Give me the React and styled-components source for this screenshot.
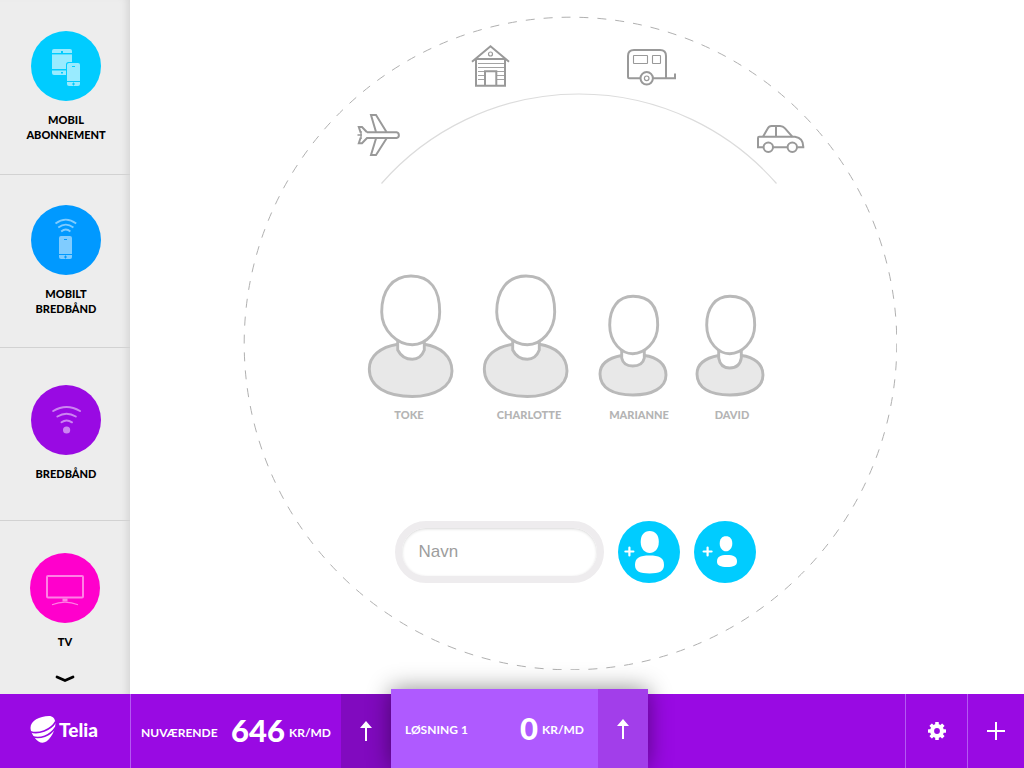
import React from 'react';
import styled, { createGlobalStyle } from 'styled-components';

const color = {
  purple: '#990ae3',
  purpleDark: '#810abf',
  purpleLight: '#af5aff',
  purpleMid: '#a23eea',
  line: '#b459f2',
  cyan: '#00ccff',
  blue: '#0099ff',
  pink: '#ff00cc',
  panel: '#ededed',
  outline: '#999999',
  figure: '#b9b9b9',
};

const GlobalStyle = createGlobalStyle`
  *, *::before, *::after { box-sizing: border-box; }
  body { margin: 0; background: #fff; font-family: Lato, "Liberation Sans", sans-serif; }
  button, input { font: inherit; }
  svg { display: block; }
`;

const Page = styled.div`
  display: flex;
  flex-direction: column;
  min-height: 100vh;
`;

const Upper = styled.div`
  display: flex;
  flex: 1;
`;

/* ---------- sidebar ---------- */

const Sidebar = styled.nav`
  display: flex;
  flex-direction: column;
  flex: 0 0 130px;
  background: ${color.panel};
  box-shadow: inset -8px 0 8px -6px rgba(0, 0, 0, 0.12);
`;

const Product = styled.button`
  display: flex;
  flex-direction: column;
  align-items: center;
  justify-content: center;
  gap: 11px;
  height: 173px;
  padding: 0 0 2px 2px;
  border: 0;
  border-bottom: 1px solid #d2d2d2;
  background: none;
  color: #000;
  font-size: 11px;
  font-weight: 900;
  line-height: 15px;
  text-align: center;
  text-transform: uppercase;
  cursor: pointer;

  &:first-child { height: 175px; }
  &:last-of-type { height: auto; padding: 32px 0 0; border-bottom: 0; }
`;

const Disc = styled.span`
  width: 70px;
  height: 70px;
  border-radius: 50%;
  background: ${(p) => p.$color};
  color: #fff;
`;

const ProductLabel = styled.span`
  width: 92px;
`;

const More = styled.a`
  align-self: center;
  margin-top: 26px;
  color: #000;
`;

/* ---------- stage ---------- */

const Main = styled.main`
  display: flex;
  flex: 1;
  justify-content: center;
  padding: 16px 14px 24px 0;
`;

const Stage = styled.div`
  position: relative;
  display: flex;
  flex-direction: column;
  align-items: center;
  width: 654px;
  min-height: 654px;
  padding: 29px 0 0 8px;
`;

const Rings = styled.svg`
  position: absolute;
  top: 0;
  left: 0;
`;

const PlaceRow = styled.div`
  position: relative;
  display: flex;
  gap: ${(p) => p.$gap};
  margin: ${(p) => p.$margin};
`;

const IconButton = styled.button`
  padding: 0;
  border: 0;
  background: none;
  color: ${color.outline};
  cursor: pointer;
`;

const People = styled.ul`
  position: relative;
  display: grid;
  grid-template-columns: 115px 116px 97px 74px;
  align-items: end;
  margin: 116px 12px 0 0;
  padding: 0;
  list-style: none;
`;

const Person = styled.li`
  width: ${(p) => p.$width};
  color: #b4b4b4;
  font-size: 11px;
  font-weight: 900;
  line-height: 16px;
  text-align: center;
  text-transform: uppercase;

  svg { margin-bottom: 8px; }
`;

const AddForm = styled.form`
  position: relative;
  display: flex;
  gap: 14px;
  margin: 98px 0 0 2px;
`;

const NameInput = styled.input`
  width: 209px;
  height: 62px;
  padding: 0 17px;
  border: 7px solid #eeecee;
  border-radius: 31px;
  outline: 0;
  background: #fff;
  box-shadow: inset 0 1px 3px rgba(0, 0, 0, 0.16);
  font-family: "Liberation Sans", sans-serif;
  font-size: 17px;
  color: #555;

  &::placeholder { color: #9d9d9d; opacity: 1; }
`;

const AddButton = styled.button`
  width: 62px;
  height: 62px;
  padding: 0;
  border: 0;
  border-radius: 50%;
  background: ${color.cyan};
  color: #fff;
  cursor: pointer;
`;

/* ---------- footer bar ---------- */

const Bar = styled.footer`
  display: flex;
  height: 74px;
  background: ${color.purple};
  color: #fff;
`;

const Brand = styled.a`
  display: flex;
  align-items: center;
  gap: 3px;
  flex: 0 0 131px;
  padding: 0 0 3px 30px;
  border-right: 1px solid ${color.line};
  color: #fff;
  font-size: 19px;
  font-weight: 900;
  line-height: 24px;
  text-decoration: none;
`;

const Plan = styled.section`
  display: flex;
  flex: 0 0 ${(p) => (p.$active ? '257px' : '260px')};
  margin-top: ${(p) => (p.$active ? '-5px' : '0')};
  background: ${(p) => (p.$active ? color.purpleLight : 'transparent')};
  box-shadow: ${(p) => (p.$active ? '0 0 22px rgba(0, 0, 0, 0.45)' : 'none')};
  z-index: ${(p) => (p.$active ? 1 : 0)};
`;

const PlanInfo = styled.div`
  display: flex;
  flex: 1;
  align-items: center;
  justify-content: space-between;
  padding: 3px ${(p) => (p.$active ? '14px' : '10px')} 0;
`;

const PlanName = styled.h2`
  margin: 0;
  font-size: 12px;
  font-weight: 700;
  line-height: 16px;
  text-transform: uppercase;
`;

const Price = styled.p`
  display: flex;
  align-items: center;
  gap: 4px;
  margin: 0;
  font-size: 12px;
  font-weight: 700;
  line-height: 16px;
`;

const Amount = styled.strong`
  padding-bottom: 5px;
  font-size: 31px;
  font-weight: 900;
  line-height: 32px;
`;

const BarButton = styled.button`
  display: flex;
  align-items: center;
  justify-content: center;
  flex: 0 0 ${(p) => p.$width};
  padding: 0;
  border: 0;
  background: ${(p) => p.$color || 'transparent'};
  color: #fff;
  cursor: pointer;
`;

const Tools = styled.div`
  display: flex;
  margin-left: auto;

  ${BarButton} { border-left: 1px solid ${color.line}; }
`;

/* ---------- drawings ---------- */

const MobileIcon = () => (
  <svg width="70" height="70" viewBox="0 0 70 70" aria-hidden="true">
    <g fill="#99ebff">
      <path d="M23 18h16a2 2 0 0 1 2 2v2H21v-2a2 2 0 0 1 2-2z" />
      <path d="M21 23.400h20v14.600h-20z" />
      <path d="M21 39.400h20V42a2 2 0 0 1-2 2H23a2 2 0 0 1-2-2z" />
    </g>
    <path d="M30 20h2v2h-2zM30 41h2v1.500h-2z" fill={color.cyan} />
    <rect x="35" y="31" width="15.500" height="25.500" rx="2.500" fill={color.cyan} />
    <rect x="36" y="32" width="13" height="23" rx="2" fill="#99ebff" />
    <path d="M41 35.500h3M36 50.500h13M42.500 51.500v3M41 53h3" stroke={color.cyan} />
  </svg>
);

const MobileBroadbandIcon = () => (
  <svg width="70" height="70" viewBox="0 0 70 70" aria-hidden="true">
    <g fill="none" stroke="#80ccff" strokeWidth="1.800">
      <path d="M24.500 18.500Q34.800 10.800 45.200 18.500" />
      <path d="M27.300 22.500Q34.800 16.800 42.400 22.500" />
      <path d="M30.200 26.500Q34.800 22.600 39.400 26.500" />
    </g>
    <rect x="28" y="31" width="13" height="23" rx="2" fill="#80ccff" />
    <path d="M33 34.500h3M28 49.500h13M34.500 50.500v3M33 52h3" stroke={color.blue} />
  </svg>
);

const WifiIcon = () => (
  <svg width="70" height="70" viewBox="0 0 70 70" aria-hidden="true">
    <g fill="none" stroke="#cc85f1" strokeWidth="2" strokeLinecap="round">
      <path d="M22.200 26Q35.500 18 49 26" />
      <path d="M26.400 31.500Q35.500 26 44.800 31.500" />
      <path d="M30.500 37.300Q35.500 33.800 41 37.300" />
    </g>
    <circle cx="35.600" cy="45" r="3.600" fill="#cc85f1" />
  </svg>
);

const TvIcon = () => (
  <svg width="70" height="70" viewBox="0 0 70 70" aria-hidden="true">
    <g fill="none" stroke="#ff80e5">
      <rect x="17" y="23" width="36" height="21.500" rx="1" strokeWidth="2" />
      <path d="M32.500 47h5" strokeWidth="3" />
      <path d="M22 51.700Q35 46.600 48 51.700" strokeWidth="1.200" />
    </g>
  </svg>
);

const ChevronIcon = () => (
  <svg width="20" height="8" viewBox="0 0 20 8" aria-hidden="true">
    <path d="M2 2L10 5.500L18 2" fill="none" stroke="currentColor" strokeWidth="2.800" strokeLinecap="round" />
  </svg>
);

const PlaneIcon = () => (
  <svg width="44" height="44" viewBox="0 0 44 44" fill="none" stroke="currentColor" strokeWidth="2" aria-hidden="true">
    <path d="M10 19.300H39.500a2.900 2.900 0 0 1 0 5.700H10L5 30.300H1.800L3.700 24.500M10 19.300L5 14H1.800L3.700 19.800" />
    <path d="M19 19L14 2H19L29.500 19M19 25.500L14 42H19L29.500 25.500" />
    <path d="M0.500 22H5M4 18V26" strokeWidth="1.400" />
  </svg>
);

const CabinIcon = () => (
  <svg width="39" height="42" viewBox="0 0 39 42" fill="none" stroke="currentColor" strokeWidth="2" aria-hidden="true">
    <path d="M1 16.700L19.500 1.300L38 16.700M5 14H34V40.800H5ZM14 40V26.200H25.300V40" />
    <circle cx="19.500" cy="9" r="2" strokeWidth="1.200" />
    <path d="M7 18.500H33M7 22.500H33M7 26.500H13M26 26.500H33M7 30.500H13M26 30.500H33M7 34.500H13M26 34.500H33" strokeWidth="0.900" />
  </svg>
);

const CaravanIcon = () => (
  <svg width="50" height="40" viewBox="0 -2 50 40" fill="none" stroke="currentColor" strokeWidth="2" aria-hidden="true">
    <path d="M13 30.300H2.500Q1 30.300 1 28.800V8Q1 2 7 2H33Q39 2 39 8V30.300M26 30.300H48V25.500" />
    <rect x="6.500" y="7.500" width="14" height="8" rx="0.500" strokeWidth="1.100" />
    <rect x="25.500" y="7.500" width="8" height="8" rx="0.500" strokeWidth="1.100" />
    <circle cx="19.700" cy="30.300" r="6.200" />
    <circle cx="19.700" cy="30.300" r="2.300" strokeWidth="1.200" />
  </svg>
);

const CarIcon = () => (
  <svg width="48" height="38" viewBox="0 -8 48 38" fill="none" stroke="currentColor" strokeWidth="2" aria-hidden="true">
    <path d="M6.500 23.300H1V14Q1 12.800 2.200 12.800H38Q46.500 14 46.300 23.300H40.500M16 23.300H30.500" />
    <path d="M6 12.800L10.700 4.500Q12 2 14.500 2H23Q26 2 27.800 4.200L35.500 12.800M19 2V12.800" />
    <circle cx="11.300" cy="23.300" r="4.700" />
    <circle cx="35.300" cy="23.300" r="4.700" />
  </svg>
);

const AdultFigure = () => (
  <svg width="88" height="126" viewBox="0 0 88 126" stroke={color.figure} strokeWidth="2.900" aria-hidden="true">
    <path fill="#e8e8e8" d="M30.700 71.200C13 74 2.300 83.500 2.300 96C2.300 114 20 123.500 45.300 123.500C67 123.500 85 114 85 98C85 83 73 73.500 57.300 71.200Z" />
    <path fill="#fff" d="M30.700 62V77C34 83.500 40 86.300 45.300 86.300C50.500 86.300 55 83 57.300 77V62Z" />
    <path fill="#fff" d="M14.700 39C14.700 18 25 3 44 3C64 3 72.700 17 72.700 39C72.700 58 59 71.700 45.300 71.700C31 71.700 14.700 58 14.700 39Z" />
  </svg>
);

const ChildFigure = ({ neck }) => (
  <svg width="70" height="106" viewBox="0 0 70 106" stroke={color.figure} strokeWidth="2.900" aria-hidden="true">
    <path fill="#e8e8e8" d="M23.700 62.500C10 65 2 71.500 2 81C2 95 15 102 35 102C54 102 68 95 68 82C68 71 59 64 46.300 62.500Z" />
    <path fill="#fff" d={`M23.700 54V65C25 ${neck - 2} 30 ${neck} 34.700 ${neck}C40 ${neck} 45 ${neck - 2} 46.300 65V54Z`} />
    <path fill="#fff" d="M11.700 32C11.700 15 20 3.300 35 3.300C52 3.300 59.700 14 59.700 32C59.700 50 46 60.700 34.700 60.700C24 60.700 11.700 50 11.700 32Z" />
  </svg>
);

const AddAdultIcon = () => (
  <svg width="62" height="62" viewBox="0 0 62 62" fill="currentColor" aria-hidden="true">
    <path d="M11.400 26.500V34.500M7.400 30.500H15.400" stroke="currentColor" strokeWidth="2.200" strokeLinecap="round" />
    <path d="M22.700 21C22.700 14 26 10 31.700 10C37.500 10 40.800 14 40.800 21C40.800 28 36.500 32 31.700 32C27 32 22.700 28 22.700 21Z" />
    <path d="M17 44C17 36.500 22 34.500 31.500 34.500C41 34.500 46 36.500 46 44C46 50.500 41 52.400 31.500 52.400C22 52.400 17 50.500 17 44Z" />
  </svg>
);

const AddChildIcon = () => (
  <svg width="62" height="62" viewBox="0 0 62 62" fill="currentColor" aria-hidden="true">
    <path d="M13.600 26.500V34.500M9.600 30.500H17.600" stroke="currentColor" strokeWidth="2.200" strokeLinecap="round" />
    <path d="M25.700 22.500C25.700 18 28 15.300 32 15.300C36 15.300 38.300 18 38.300 22.500C38.300 27 35.500 30.300 32 30.300C28.500 30.300 25.700 27 25.700 22.500Z" />
    <path d="M23 40.500C23 35.500 26.500 34 33 34C39.500 34 43 35.500 43 40.500C43 44.700 39.500 46 33 46C26.500 46 23 44.700 23 40.500Z" />
  </svg>
);

const LogoMark = () => (
  <svg width="26" height="27" viewBox="0 0 26 27" aria-hidden="true">
    <path fill="#fff" d="M0.600 13C-0.500 5.500 9 0 19 0C22.500 0 25.600 2.500 25.400 8C25 17 18 26.800 12.500 26.800C7.500 26.800 1.200 18.500 0.600 13Z" />
    <path fill="none" stroke={color.purple} strokeWidth="1.700" d="M0.500 15.800C8 18.500 21 14.500 25.800 5.500" />
    <path fill="none" stroke={color.purple} strokeWidth="1.600" d="M2.500 20.700C10 23 20 20 25.500 11.500" />
  </svg>
);

const ArrowUpIcon = () => (
  <svg width="12" height="20" viewBox="0 0 12 20" fill="currentColor" aria-hidden="true">
    <path d="M6 0L12 7H7V20H5V7H0Z" />
  </svg>
);

const GearIcon = () => (
  <svg width="18" height="18" viewBox="0 0 18 18" aria-hidden="true">
    <circle cx="9" cy="9" r="4.900" fill="none" stroke="currentColor" strokeWidth="4" />
    {[0, 45, 90, 135].map((angle) => (
      <g key={angle} transform={`rotate(${angle} 9 9)`} fill="currentColor">
        <rect x="7.200" y="0" width="3.600" height="4" rx="0.500" />
        <rect x="7.200" y="14" width="3.600" height="4" rx="0.500" />
      </g>
    ))}
  </svg>
);

const PlusIcon = () => (
  <svg width="18" height="18" viewBox="0 0 18 18" aria-hidden="true">
    <path d="M9 0V18M0 9H18" stroke="currentColor" strokeWidth="2" />
  </svg>
);

/* ---------- page ---------- */

const products = [
  { label: 'Mobil abonnement', color: color.cyan, Icon: MobileIcon },
  { label: 'Mobilt bredbånd', color: color.blue, Icon: MobileBroadbandIcon },
  { label: 'Bredbånd', color: color.purple, Icon: WifiIcon },
  { label: 'TV', color: color.pink, Icon: TvIcon },
];

const people = [
  { name: 'Toke', width: '84px', figure: <AdultFigure /> },
  { name: 'Charlotte', width: '94px', figure: <AdultFigure /> },
  { name: 'Marianne', width: '82px', figure: <ChildFigure neck={73} /> },
  { name: 'David', width: '74px', figure: <ChildFigure neck={75} /> },
];

const plans = [
  { name: 'Nuværende', amount: 646, button: color.purpleDark },
  { name: 'Løsning 1', amount: 0, button: color.purpleMid, active: true },
];

export default function App() {
  return (
    <Page>
      <GlobalStyle />
      <Upper>
        <Sidebar>
          {products.map(({ label, color: fill, Icon }) => (
            <Product key={label} type="button">
              <Disc $color={fill}><Icon /></Disc>
              <ProductLabel>{label}</ProductLabel>
            </Product>
          ))}
          <More href="#more" aria-label="Flere produkter"><ChevronIcon /></More>
        </Sidebar>

        <Main>
          <Stage>
            <Rings width="654" height="654" viewBox="0 0 654 654" fill="none" aria-hidden="true">
              <circle cx="327.500" cy="327.500" r="326.300" stroke="#b0b0b0" pathLength="228" strokeDasharray="1 1" />
              <path d="M138.500 167.500A262.700 262.700 0 0 1 533.500 167.500" stroke="#dcdcdc" strokeWidth="1.200" />
            </Rings>
            <PlaceRow $gap="117px" $margin="0">
              <IconButton type="button" aria-label="Sommerhus"><CabinIcon /></IconButton>
              <IconButton type="button" aria-label="Campingvogn"><CaravanIcon /></IconButton>
            </PlaceRow>
            <PlaceRow $gap="356px" $margin="26px 0 0 14px">
              <IconButton type="button" aria-label="Fly"><PlaneIcon /></IconButton>
              <IconButton type="button" aria-label="Bil"><CarIcon /></IconButton>
            </PlaceRow>
            <People>
              {people.map(({ name, width, figure }) => (
                <Person key={name} $width={width}>
                  {figure}
                  {name}
                </Person>
              ))}
            </People>
            <AddForm onSubmit={(event) => event.preventDefault()}>
              <NameInput type="text" placeholder="Navn" aria-label="Navn" />
              <AddButton type="submit" aria-label="Tilføj voksen"><AddAdultIcon /></AddButton>
              <AddButton type="submit" aria-label="Tilføj barn"><AddChildIcon /></AddButton>
            </AddForm>
          </Stage>
        </Main>
      </Upper>

      <Bar>
        <Brand href="#home"><LogoMark />Telia</Brand>
        {plans.map(({ name, amount, button, active }) => (
          <Plan key={name} $active={active}>
            <PlanInfo $active={active}>
              <PlanName>{name}</PlanName>
              <Price><Amount>{amount}</Amount>KR/MD</Price>
            </PlanInfo>
            <BarButton type="button" $width="50px" $color={button} aria-label={`Åbn ${name}`}>
              <ArrowUpIcon />
            </BarButton>
          </Plan>
        ))}
        <Tools>
          <BarButton type="button" $width="62px" aria-label="Indstillinger"><GearIcon /></BarButton>
          <BarButton type="button" $width="57px" aria-label="Ny løsning"><PlusIcon /></BarButton>
        </Tools>
      </Bar>
    </Page>
  );
}
